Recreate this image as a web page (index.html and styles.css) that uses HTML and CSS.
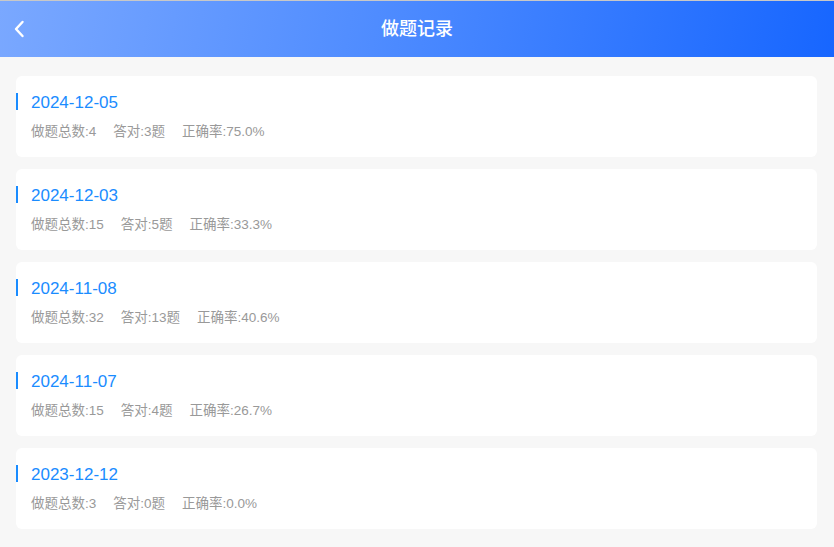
FILE: index.html
```html
<!DOCTYPE html>
<html lang="zh-CN">

<head>
    <meta charset="UTF-8">
    <meta name="viewport" content="width=device-width, initial-scale=1.0">
    <title>做题记录</title>
    <link rel="stylesheet" href="styles.css">
</head>

<body>
    <header class="header">
        <a class="back" href="#">
            <svg width="12" height="18" viewBox="0 0 12 18">
                <path d="M9.5 2 L3 9 L9.5 16" fill="none" stroke="#fff" stroke-width="2.4" stroke-linecap="round" stroke-linejoin="round"/>
            </svg>
        </a>
        <h1 class="title">做题记录</h1>
    </header>
    <main class="list">
        <div class="card">
            <div class="date">2024-12-05</div>
            <div class="stats"><span>做题总数:4</span><span>答对:3题</span><span>正确率:75.0%</span></div>
        </div>
        <div class="card">
            <div class="date">2024-12-03</div>
            <div class="stats"><span>做题总数:15</span><span>答对:5题</span><span>正确率:33.3%</span></div>
        </div>
        <div class="card">
            <div class="date">2024-11-08</div>
            <div class="stats"><span>做题总数:32</span><span>答对:13题</span><span>正确率:40.6%</span></div>
        </div>
        <div class="card">
            <div class="date">2024-11-07</div>
            <div class="stats"><span>做题总数:15</span><span>答对:4题</span><span>正确率:26.7%</span></div>
        </div>
        <div class="card">
            <div class="date">2023-12-12</div>
            <div class="stats"><span>做题总数:3</span><span>答对:0题</span><span>正确率:0.0%</span></div>
        </div>
    </main>
</body>

</html>
```

FILE: styles.css
```css
html,
body {
    margin: 0;
    padding: 0;
}

body {
    background-color: #f7f7f7;
    font-family: "Liberation Sans", "Noto Sans CJK SC", sans-serif;
    border-top: 1px solid #c8c8c8;
}

.header {
    height: 56px;
    display: flex;
    align-items: center;
    justify-content: center;
    position: relative;
    background: linear-gradient(100deg, #7aa8ff 0%, #4f8cff 45%, #1766ff 100%);
}

.back {
    position: absolute;
    left: 13px;
    top: 19px;
    display: flex;
}

.title {
    margin: 0 0 4px;
    color: #fff;
    font-size: 18px;
    font-weight: 500;
    font-family: "Noto Sans CJK SC", sans-serif;
}

.list {
    display: flex;
    flex-direction: column;
    gap: 12px;
    padding: 19px 17px 18px 16px;
}

.card {
    background-color: #fff;
    border-radius: 6px;
    padding: 17px 0 16px;
}

.date {
    border-left: 2px solid #1a8cff;
    padding-left: 13px;
    height: 17px;
    line-height: 19px;
    font-size: 17px;
    color: #1a8cff;
}

.stats {
    margin-top: 13px;
    padding-left: 15px;
    line-height: 18px;
    font-size: 13.5px;
    color: #999;
}

.stats span {
    margin-right: 17px;
}
```
